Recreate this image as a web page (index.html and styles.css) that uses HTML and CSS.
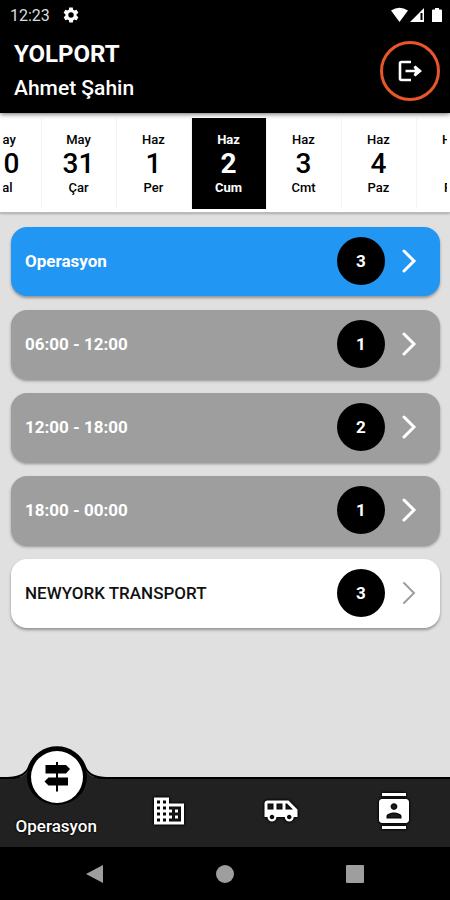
FILE: index.html
```html
<!DOCTYPE html>
<html lang="tr">
<head>
<meta charset="utf-8">
<meta name="viewport" content="width=device-width, initial-scale=1">
<title>YOLPORT</title>
<link rel="stylesheet" href="styles.css">
</head>
<body>
<div class="app">
  <header class="header">
    <div class="status">
      <span>12:23</span>
      <svg class="gear" viewBox="0 0 24 24" width="18" height="18"><path fill="#fff" fill-rule="evenodd" d="M19.4 13c0-.3.1-.6.1-1s0-.7-.1-1l2.1-1.600c.2-.2.200-.4.100-.600l-2-3.500c-.1-.2-.4-.3-.6-.2l-2.500 1c-.5-.4-1.100-.7-1.700-1l-.4-2.600c0-.3-.2-.5-.4-.5h-4c-.3 0-.5.2-.5.4l-.4 2.700c-.6.3-1.100.6-1.700 1l-2.500-1c-.2-.1-.5 0-.6.2l-2 3.500c-.1.2-.1.5.1.600L4.600 11c0 .3-.1.7-.1 1s0 .7.1 1l-2.100 1.600c-.2.2-.2.400-.1.600l2 3.500c.1.2.4.3.6.2l2.500-1c.5.4 1.100.7 1.700 1l.4 2.700c0 .2.2.4.5.4h4c.2 0 .4-.2.4-.4l.4-2.700c.6-.3 1.200-.6 1.700-1l2.500 1c.2.1.5 0 .6-.2l2-3.500c.1-.2.1-.4-.1-.6zM12 15.600a3.600 3.600 0 1 1 0-7.200 3.600 3.600 0 0 1 0 7.200z"/></svg>
      <svg class="signals" viewBox="0 0 52 16" width="52" height="16">
        <path fill="#fff" d="M0 3.500Q8.500 -2 17 3.500L8.500 15zM33 1v14H19zM42 2.500h2V1h4v1.500h2q1 0 1 1V15H41V3.500q0-1 1-1z"/>
        <path fill="#000" d="M29.500 6h2v7h-2z"/>
      </svg>
    </div>
    <div class="title-row">
      <div>
        <h1>YOLPORT</h1>
        <p>Ahmet Şahin</p>
      </div>
      <button class="logout" type="button" aria-label="Çıkış">
        <svg viewBox="0 0 26 24" width="26" height="24" fill="none" stroke="#fff" stroke-width="2.600"><path d="M14 3H4.500Q3 3 3 4.500V19.500Q3 21 4.500 21H14M8.500 12H22"/><path fill="#fff" stroke="none" d="M18.500 6.500l6.500 5.500-6.500 5.500-2-1.500 2-4-2-4z"/></svg>
      </button>
    </div>
  </header>

  <nav class="dates" aria-label="Tarih">
    <div class="days">
      <button type="button"><span>May</span><b>30</b><span>Sal</span></button>
      <button type="button"><span>May</span><b>31</b><span>Çar</span></button>
      <button type="button"><span>Haz</span><b>1</b><span>Per</span></button>
      <button type="button" class="selected"><span>Haz</span><b>2</b><span>Cum</span></button>
      <button type="button"><span>Haz</span><b>3</b><span>Cmt</span></button>
      <button type="button"><span>Haz</span><b>4</b><span>Paz</span></button>
      <button type="button"><span>Haz</span><b>5</b><span>Pzt</span></button>
    </div>
  </nav>

  <main class="list">
    <button type="button" class="card blue"><span class="name">Operasyon</span><span class="count">3</span><svg class="chevron" viewBox="0 0 16 24" width="16" height="24"><path d="M3 2l10 10L3 22"/></svg></button>
    <button type="button" class="card gray"><span class="name">06:00 - 12:00</span><span class="count">1</span><svg class="chevron" viewBox="0 0 16 24" width="16" height="24"><path d="M3 2l10 10L3 22"/></svg></button>
    <button type="button" class="card gray"><span class="name">12:00 - 18:00</span><span class="count">2</span><svg class="chevron" viewBox="0 0 16 24" width="16" height="24"><path d="M3 2l10 10L3 22"/></svg></button>
    <button type="button" class="card gray"><span class="name">18:00 - 00:00</span><span class="count">1</span><svg class="chevron" viewBox="0 0 16 24" width="16" height="24"><path d="M3 2l10 10L3 22"/></svg></button>
    <button type="button" class="card white"><span class="name">NEWYORK TRANSPORT</span><span class="count">3</span><svg class="chevron" viewBox="0 0 16 24" width="16" height="24"><path d="M3 2l10 10L3 22"/></svg></button>
  </main>

  <nav class="tabs" aria-label="Menü">
    <a href="#operasyon" class="active">
      <svg class="bump" viewBox="0 0 100 64" width="100" height="64">
        <path fill="#212121" d="M0 34Q18 34 22 24A30 30 0 0 1 78 24Q82 34 100 34V64H0z"/>
        <path fill="none" stroke="#000" stroke-width="2" d="M0 33Q17 33 21.500 23A30 30 0 0 1 78.500 23Q83 33 100 33"/>
        <path fill="#000" d="M20 32a30 30 0 0 1 60 0a30 28 0 0 1-60 0z"/>
        <circle cx="50" cy="32" r="26" fill="#fff"/>
        <path fill="#000" d="M49 17h2v3h8l4 4-4 4.500h-8V32.500h10v8H51v6h-2v-6h-7.500l-4-4 4-4H49v-4H38.500V20H49z"/>
      </svg>
      <span>Operasyon</span>
    </a>
    <a href="#firmalar" aria-label="Firmalar"><svg class="icon" viewBox="0 0 24 24" width="36" height="36"><path d="M12 7V3H2v18h20V7H12zM6 19H4v-2h2v2zm0-4H4v-2h2v2zm0-4H4V9h2v2zm0-4H4V5h2v2zm4 12H8v-2h2v2zm0-4H8v-2h2v2zm0-4H8V9h2v2zm0-4H8V5h2v2zm10 12h-8v-2h2v-2h-2v-2h2v-2h-2V9h8v10zm-2-8h-2v2h2v-2zm0 4h-2v2h2v-2z"/></svg></a>
    <a href="#araclar" aria-label="Araçlar"><svg class="icon" viewBox="0 0 24 24" width="36" height="36"><path d="M17 5H3c-1.100 0-2 .89-2 2v9h2c0 1.650 1.340 3 3 3s3-1.350 3-3h5.500c0 1.650 1.340 3 3 3s3-1.350 3-3H23v-5l-6-6zM3 11V7h4v4H3zm3 6.500c-.83 0-1.500-.67-1.500-1.500s.67-1.500 1.500-1.500 1.500.67 1.500 1.500-.67 1.500-1.500 1.500zm7-6.500H9V7h4v4zm4.500 6.500c-.83 0-1.500-.67-1.500-1.500s.67-1.500 1.500-1.500 1.500.67 1.500 1.500-.67 1.500-1.500 1.500zM15 11V7h1l4 4h-5z"/></svg></a>
    <a href="#kisiler" aria-label="Kişiler"><svg class="icon" viewBox="0 0 24 24" width="36" height="36"><path d="M20 0H4v2h16V0zM4 24h16v-2H4v2zM20 4H4c-1.100 0-2 .9-2 2v12c0 1.100.9 2 2 2h16c1.100 0 2-.9 2-2V6c0-1.100-.9-2-2-2zm-8 2.750c1.240 0 2.250 1.010 2.250 2.250s-1.010 2.250-2.250 2.250S9.750 10.240 9.750 9 10.760 6.750 12 6.750zM17 17H7v-1.500c0-1.670 3.330-2.500 5-2.500s5 .83 5 2.500V17z"/></svg></a>
  </nav>

  <div class="system">
    <button type="button" aria-label="Geri"><svg viewBox="0 0 20 20" width="20" height="20"><path d="M18 1v18L1 10z"/></svg></button>
    <button type="button" aria-label="Ana ekran"><svg viewBox="0 0 20 20" width="20" height="20"><circle cx="10" cy="10" r="9"/></svg></button>
    <button type="button" aria-label="Son uygulamalar"><svg viewBox="0 0 20 20" width="20" height="20"><rect x="1" y="1" width="18" height="18" rx="1"/></svg></button>
  </div>
</div>
</body>
</html>
```
FILE: styles.css
```css
* { box-sizing: border-box; }
body {
  margin: 0;
  font-family: Roboto, "Liberation Sans", sans-serif;
  background: #e0e0e0;
}
button {
  font: inherit;
  color: inherit;
  border: 0;
  padding: 0;
  background: none;
}
svg { display: block; }
.app {
  min-height: 100vh;
  display: flex;
  flex-direction: column;
}
.header {
  background: #000;
  color: #fff;
  padding-bottom: 8px;
  box-shadow: 0 1px 5px rgba(0, 0, 0, .6);
  position: relative;
}
.status {
  display: flex;
  align-items: center;
  gap: 12px;
  height: 30px;
  padding: 0 7px 0 10px;
  font-size: 16px;
  color: #ddd;
}
.signals { margin-left: auto; }
.title-row {
  display: flex;
  justify-content: space-between;
  align-items: center;
  padding: 7px 10px 0 14px;
}
h1 {
  margin: 0;
  font-size: 24px;
  line-height: 35px;
  font-weight: 700;
}
p {
  margin: 0;
  font-size: 21px;
  line-height: 33px;
  font-weight: 500;
}
.logout {
  width: 60px;
  height: 60px;
  border: 3px solid #e8562a;
  border-radius: 50%;
  display: grid;
  place-items: center;
}
.dates {
  background: #fff;
  padding: 5px 3px 3px;
  border-bottom: 1px solid #bbb;
  box-shadow: 0 1px 2px rgba(0, 0, 0, .25);
}
.days {
  display: flex;
  justify-content: center;
  padding-left: 8px;
  overflow: hidden;
}
.days button {
  flex: 0 0 75px;
  height: 91px;
  display: flex;
  flex-direction: column;
  align-items: center;
  justify-content: center;
  border-right: 1px solid #f4f4f4;
  font-size: 13px;
  line-height: 18px;
  font-weight: 500;
}
.days b {
  font-size: 28px;
  line-height: 30px;
  font-weight: 500;
}
.days .selected {
  background: #000;
  color: #fff;
  font-weight: 700;
}
.days .selected b { font-weight: 700; }
.list {
  flex: 1;
  display: flex;
  flex-direction: column;
  gap: 14px;
  padding: 14px 10px 14px 11px;
}
.card {
  display: flex;
  align-items: center;
  padding: 10px 23px 11px 14px;
  border-radius: 16px;
  box-shadow: 0 2px 3px rgba(0, 0, 0, .35);
  font-size: 17px;
  font-weight: 700;
  color: #fff;
}
.blue { background: #2196f3; }
.gray { background: #9e9e9e; }
.white {
  background: #fff;
  color: #111;
  font-weight: 500;
}
.name {
  flex: 1;
  text-align: left;
}
.count {
  width: 48px;
  height: 48px;
  border-radius: 50%;
  background: #000;
  color: #fff;
  font-weight: 700;
  display: grid;
  place-items: center;
}
.chevron {
  margin-left: 16px;
  fill: none;
  stroke: #fff;
  stroke-width: 3;
  stroke-linecap: round;
}
.white .chevron {
  stroke: #9e9e9e;
  stroke-width: 2;
}
.tabs {
  display: grid;
  grid-template-columns: repeat(4, 1fr);
  height: 70px;
  background: #212121;
  border-top: 2px solid #000;
}
.tabs a {
  display: grid;
  place-items: center;
  position: relative;
  padding-bottom: 4px;
  color: #fff;
  text-decoration: none;
  font-size: 17px;
  font-weight: 500;
}
.tabs .active {
  align-items: end;
  padding-bottom: 11px;
}
.bump {
  position: absolute;
  top: -34px;
  left: 7px;
}
.active span {
  text-shadow: 0 0 2px #000, 0 0 2px #000;
}
.icon {
  fill: #fff;
  overflow: visible;
  filter: drop-shadow(0 0 1px #000) drop-shadow(0 0 1px #000);
}
.system {
  display: flex;
  justify-content: center;
  gap: 110px;
  height: 53px;
  background: #000;
}
.system svg { fill: #9e9e9e; }
```
